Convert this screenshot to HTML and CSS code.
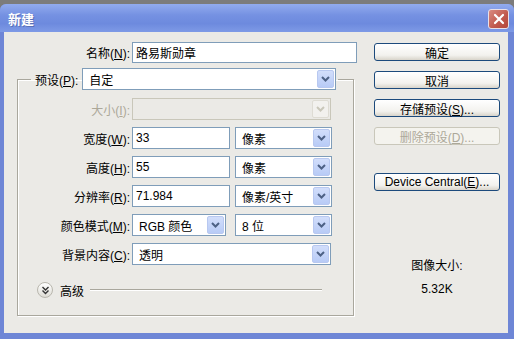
FILE: index.html
```html
<!DOCTYPE html>
<html lang="zh-CN">
<head>
  <meta charset="UTF-8">
  <title>新建</title>
  <link rel="stylesheet" href="styles.css">
</head>
<body>
  <div class="window">
    <div class="titlebar">
      <span class="title">新建</span>
      <span class="close-btn">
        <svg width="12" height="12" viewBox="0 0 12 12"><path d="M2 2 L10 10 M10 2 L2 10" stroke="#fff" stroke-width="2.2" stroke-linecap="round"/></svg>
      </span>
    </div>

    <div class="client">
      <div class="form">
        <div class="row name-row">
          <label class="lbl">名称(<u>N</u>):</label>
          <input class="field" type="text" value="路易斯勋章">
        </div>

        <fieldset class="group">
          <legend class="preset">
            <label class="lbl">预设(<u>P</u>):</label>
            <div class="combo preset-combo"><span class="val">自定</span><span class="arrow"><svg width="9" height="6" viewBox="0 0 9 6"><path d="M1 1 L4.5 4.5 L8 1" fill="none" stroke="#4d6185" stroke-width="2"/></svg></span></div>
          </legend>

          <div class="row">
            <label class="lbl disabled">大小(<u>I</u>):</label>
            <div class="combo wide disabled-combo"><span class="val"></span><span class="arrow"><svg width="9" height="6" viewBox="0 0 9 6"><path d="M1 1 L4.5 4.5 L8 1" fill="none" stroke="#c9c7ba" stroke-width="2"/></svg></span></div>
          </div>

          <div class="row">
            <label class="lbl">宽度(<u>W</u>):</label>
            <input class="field num" type="text" value="33">
            <div class="combo unit"><span class="val">像素</span><span class="arrow"><svg width="9" height="6" viewBox="0 0 9 6"><path d="M1 1 L4.5 4.5 L8 1" fill="none" stroke="#4d6185" stroke-width="2"/></svg></span></div>
          </div>

          <div class="row">
            <label class="lbl">高度(<u>H</u>):</label>
            <input class="field num" type="text" value="55">
            <div class="combo unit"><span class="val">像素</span><span class="arrow"><svg width="9" height="6" viewBox="0 0 9 6"><path d="M1 1 L4.5 4.5 L8 1" fill="none" stroke="#4d6185" stroke-width="2"/></svg></span></div>
          </div>

          <div class="row">
            <label class="lbl">分辨率(<u>R</u>):</label>
            <input class="field num" type="text" value="71.984">
            <div class="combo unit"><span class="val">像素/英寸</span><span class="arrow"><svg width="9" height="6" viewBox="0 0 9 6"><path d="M1 1 L4.5 4.5 L8 1" fill="none" stroke="#4d6185" stroke-width="2"/></svg></span></div>
          </div>

          <div class="row">
            <label class="lbl">颜色模式(<u>M</u>):</label>
            <div class="combo mode"><span class="val">RGB 颜色</span><span class="arrow"><svg width="9" height="6" viewBox="0 0 9 6"><path d="M1 1 L4.5 4.5 L8 1" fill="none" stroke="#4d6185" stroke-width="2"/></svg></span></div>
            <div class="combo unit"><span class="val">8 位</span><span class="arrow"><svg width="9" height="6" viewBox="0 0 9 6"><path d="M1 1 L4.5 4.5 L8 1" fill="none" stroke="#4d6185" stroke-width="2"/></svg></span></div>
          </div>

          <div class="row">
            <label class="lbl">背景内容(<u>C</u>):</label>
            <div class="combo wide"><span class="val">透明</span><span class="arrow"><svg width="9" height="6" viewBox="0 0 9 6"><path d="M1 1 L4.5 4.5 L8 1" fill="none" stroke="#4d6185" stroke-width="2"/></svg></span></div>
          </div>

          <div class="advanced">
            <span class="adv-icon">
              <svg width="9" height="9" viewBox="0 0 9 9"><path d="M1.5 1 L4.5 4 L7.5 1 M1.5 4.5 L4.5 7.5 L7.5 4.5" fill="none" stroke="#333" stroke-width="1.4"/></svg>
            </span>
            <span class="adv-text">高级</span>
            <span class="adv-line"></span>
          </div>
        </fieldset>
      </div>

      <div class="side">
        <button class="btn">确定</button>
        <button class="btn">取消</button>
        <button class="btn">存储预设(<u>S</u>)...</button>
        <button class="btn" disabled>删除预设(<u>D</u>)...</button>
        <button class="btn device">Device Central(<u>E</u>)...</button>
        <div class="size-label">图像大小:</div>
        <div class="size-value">5.32K</div>
      </div>
    </div>
  </div>
</body>
</html>
```

FILE: styles.css
```css
* {
  box-sizing: border-box;
}
body {
  margin: 0;
  background: #7c7c7c;
  font-family: "Liberation Sans", "Noto Sans CJK SC", sans-serif;
  font-size: 12px;
  color: #000;
}
.window {
  margin-top: 4px;
  width: 514px;
  height: 335px;
  background: #6e86d6;
  border-radius: 6px 6px 0 0;
  padding: 0 6px 6px 4px;
  display: flex;
  flex-direction: column;
}
.titlebar {
  height: 28px;
  margin: 0 -6px 0 -4px;
  padding: 0 5px 0 8px;
  border-radius: 6px 6px 0 0;
  background: linear-gradient(#92abee, #7591e2 40%, #6d8ade 70%, #7e9ae6);
  display: flex;
  align-items: center;
  justify-content: space-between;
}
.title {
  color: #fff;
  font-family: "Noto Sans CJK SC", sans-serif;
  font-weight: bold;
  font-size: 13px;
  text-shadow: 1px 1px 0 #5a70b8;
}
.close-btn {
  width: 21px;
  height: 20px;
  margin-top: 2px;
  border: 1px solid #e8e0e8;
  border-radius: 3px;
  background: linear-gradient(135deg, #d98a80, #c0584d 60%, #b4473c);
  display: flex;
  align-items: center;
  justify-content: center;
}
.client {
  flex: 1;
  background: #ebeae6;
  display: flex;
  padding-top: 9px;
}
.form {
  width: 370px;
}
.row {
  display: flex;
  align-items: center;
  gap: 4px;
  height: 22px;
}
.lbl {
  width: 112px;
  text-align: right;
  white-space: nowrap;
  margin-right: -2px;
}
.lbl u {
  text-decoration: underline;
}
.lbl.disabled {
  color: #aca899;
}
.name-row .lbl {
  width: 126px;
}
.field {
  height: 22px;
  border: 1px solid #7f9db9;
  background: #fff;
  padding: 0 3px;
  font: inherit;
  outline: none;
}
.name-row .field {
  width: 225px;
  height: 21px;
}
.field.num {
  width: 98px;
  margin-right: 1px;
}
.group {
  margin: 5px 0 0 13px;
  width: 337px;
  padding: 8px 0 17px 0;
  border: 1px solid #a9a79d;
  border-top-color: #a9a79d;
  box-shadow: inset 1px 1px 0 #fff, 1px 1px 0 #fff;
}
.group .row + .row {
  margin-top: 7px;
}
.preset {
  margin-left: 13px;
  padding: 0 2px 0 4px;
  display: flex;
  align-items: center;
  gap: 4px;
}
.preset .lbl {
  width: auto;
  margin-right: 0;
}
.combo {
  height: 22px;
  border: 1px solid #7f9db9;
  background: #fff;
  display: flex;
  align-items: center;
  justify-content: space-between;
  padding: 1px 1px 1px 6px;
}
.combo .val {
  white-space: nowrap;
}
.combo .arrow {
  width: 17px;
  height: 18px;
  border: 1px solid #b8c8f0;
  border-radius: 2px;
  background: linear-gradient(#d2defb, #b8cbf6);
  display: flex;
  align-items: center;
  justify-content: center;
}
.preset-combo {
  width: 254px;
}
.combo.wide {
  width: 199px;
}
.combo.unit {
  width: 97px;
}
.combo.mode {
  width: 94px;
  margin-right: 5px;
}
.disabled-combo {
  background: #ebeae6;
  border-color: #c9c7ba;
}
.disabled-combo .arrow {
  background: #f2f1ee;
  border-color: #dedcd4;
}
.advanced {
  display: flex;
  align-items: center;
  margin: 17px 0 0 19px;
  height: 16px;
}
.adv-icon {
  width: 16px;
  height: 16px;
  border-radius: 50%;
  border: 1px solid #b9b7ae;
  background: linear-gradient(#ffffff, #dedcd5);
  display: flex;
  align-items: center;
  justify-content: center;
}
.adv-text {
  font-family: "Noto Sans CJK SC", sans-serif;
  margin-left: 7px;
}
.adv-line {
  width: 232px;
  height: 2px;
  margin-left: 6px;
  border-top: 1px solid #a9a79d;
  border-bottom: 1px solid #fff;
}
.side {
  width: 126px;
  display: flex;
  flex-direction: column;
  align-items: center;
  padding-top: 2px;
}
.btn {
  width: 126px;
  height: 18px;
  margin: 0 0 10px 0;
  padding: 0;
  border: 1px solid #1c4a7c;
  border-radius: 3px;
  background: linear-gradient(#ffffff, #f3f2ee 70%, #d8d4ca);
  font: inherit;
  color: #000;
}
.btn:disabled {
  border-color: #c9c7ba;
  color: #aca899;
  background: #f4f3ee;
}
.btn.device {
  margin-top: 18px;
}
.size-label {
  margin-top: 57px;
  line-height: 16px;
}
.size-value {
  margin-top: 7px;
  line-height: 16px;
}
```
